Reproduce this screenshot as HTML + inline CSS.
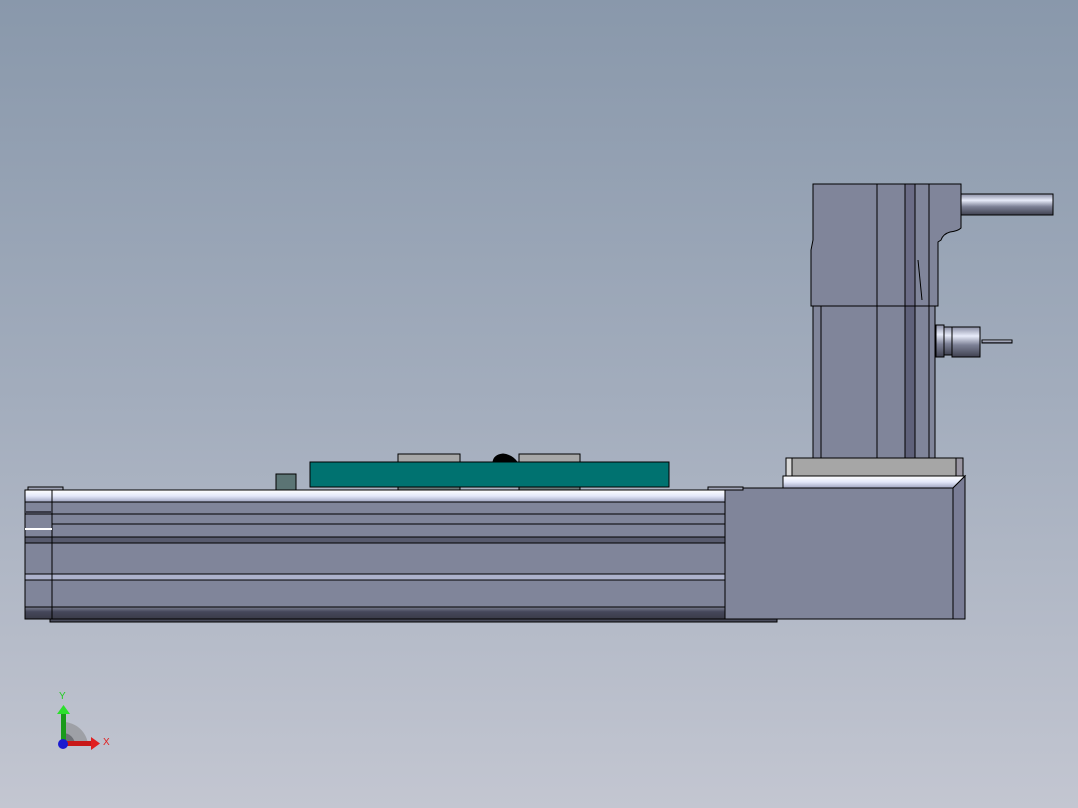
<!DOCTYPE html>
<html><head><meta charset="utf-8"><style>
html,body{margin:0;padding:0;width:1078px;height:808px;overflow:hidden}
</style></head><body>
<svg width="1078" height="808" viewBox="0 0 1078 808" xmlns="http://www.w3.org/2000/svg">
<defs>
<linearGradient id="bg" x1="0" y1="0" x2="0" y2="1">
<stop offset="0" stop-color="#8998ab"/><stop offset="0.5" stop-color="#a3adbd"/><stop offset="1" stop-color="#c3c6d1"/>
</linearGradient>
<linearGradient id="hl" x1="0" y1="0" x2="0" y2="1">
<stop offset="0" stop-color="#ffffff"/><stop offset="0.5" stop-color="#e4e8fa"/><stop offset="1" stop-color="#9ea4c0"/>
</linearGradient>
<linearGradient id="dk" x1="0" y1="0" x2="0" y2="1">
<stop offset="0" stop-color="#7a7e90"/><stop offset="0.4" stop-color="#45475a"/><stop offset="1" stop-color="#3a3b48"/>
</linearGradient>
<linearGradient id="cyl" x1="0" y1="0" x2="0" y2="1">
<stop offset="0" stop-color="#8a8ea4"/><stop offset="0.3" stop-color="#e8ecfa"/><stop offset="0.6" stop-color="#7d8196"/><stop offset="1" stop-color="#3f4150"/>
</linearGradient>
</defs>
<rect width="1078" height="808" fill="url(#bg)"/>
<g stroke="#000" stroke-width="1">
<!-- motor top -->
<path d="M813 184 H961 V228 Q958 231 950 232 Q943 234 941 240 L938 242 V306 H811 V250 L813 240 Z" fill="#80859a"/>
<rect x="905" y="184" width="10" height="122" fill="#6b6c86"/>
<path d="M877 184 V306 M929 184 V306 M918 260 L922 300" fill="none"/>
<rect x="961" y="194" width="92" height="21" fill="url(#cyl)"/>
<!-- motor lower -->
<rect x="813" y="306" width="122" height="152" fill="#80859a"/>
<rect x="905" y="306" width="10" height="152" fill="#5f617a"/>
<path d="M821 306 V458 M877 306 V458 M929 306 V458" fill="none"/>
<rect x="936" y="325" width="8" height="32" fill="url(#cyl)"/>
<rect x="944" y="327" width="8" height="28" fill="url(#cyl)"/>
<rect x="952" y="327" width="28" height="30" fill="url(#cyl)"/>
<rect x="982" y="340" width="30" height="3" fill="url(#cyl)"/>
<!-- flange -->
<rect x="786" y="458" width="177" height="18" fill="#a6a6a6"/>
<rect x="786" y="458" width="6" height="18" fill="#d8d8d8"/>
<rect x="956" y="458" width="7" height="18" fill="#9a96a2"/>
<!-- right block -->
<path d="M783 476 H965 L953 488 H783 Z" fill="url(#hl)"/>
<rect x="725" y="488" width="228" height="131" fill="#80859a"/>
<path d="M953 488 L965 476 V619 H953 Z" fill="#7a7d96"/>
<!-- bottom plate -->
<rect x="50" y="619" width="727" height="3" fill="#4a4c5c"/>
<!-- rail -->
<rect x="25" y="490" width="700" height="129" fill="#80859a"/>
<rect x="25" y="490" width="700" height="12" fill="url(#hl)"/>
<rect x="25" y="537" width="700" height="6" fill="#585b6e"/>
<rect x="25" y="574" width="700" height="6" fill="#adb2cc"/>
<rect x="25" y="607" width="700" height="12" fill="url(#dk)"/>
<path d="M25 514 H725 M52 524 H725 M25 543 H725" fill="none"/>
<rect x="25" y="490" width="27" height="129" fill="none"/>
<rect x="25" y="511" width="27" height="2" fill="#3a3b48" stroke="none"/>
<rect x="25" y="528" width="27" height="2" fill="#ffffff" stroke="none"/>
<rect x="28" y="487" width="35" height="3" fill="#a0a4b6"/>
<rect x="708" y="487" width="35" height="3" fill="#a0a4b6"/>
<!-- carriage -->
<rect x="276" y="474" width="20" height="16" fill="#5b7474"/>
<rect x="398" y="454" width="62" height="8" fill="#a8a8a8"/>
<rect x="519" y="454" width="61" height="8" fill="#a8a8a8"/>
<path d="M493 462 Q494 455 503 454 Q512 455 517 462 Z" fill="#000"/>
<rect x="398" y="486" width="62" height="4" fill="#6a7a7a"/>
<rect x="519" y="486" width="61" height="4" fill="#6a7a7a"/>
<rect x="310" y="462" width="359" height="25" fill="#007270"/>
</g>
<!-- triad -->
<path d="M63 745 L63 722 A25 25 0 0 1 88 745 Z" fill="#9ea0a6"/>
<path d="M63 745 L63 733 A12 12 0 0 1 75 745 Z" fill="#6e7076"/>
<rect x="61" y="712" width="5" height="33" fill="#1a9a1a"/>
<path d="M57 714 L63.5 705 L70 714 Z" fill="#2ce02c"/>
<rect x="63" y="741" width="30" height="5" fill="#c81818"/>
<path d="M91 737 L100 743.5 L91 750 Z" fill="#e02020"/>
<circle cx="63" cy="744" r="5" fill="#1a1ad0"/>
<text x="59" y="699" font-family="Liberation Sans, sans-serif" font-size="10" fill="#22cc22">Y</text>
<text x="103" y="745" font-family="Liberation Sans, sans-serif" font-size="10" fill="#e02020">X</text>
</svg>
</body></html>
